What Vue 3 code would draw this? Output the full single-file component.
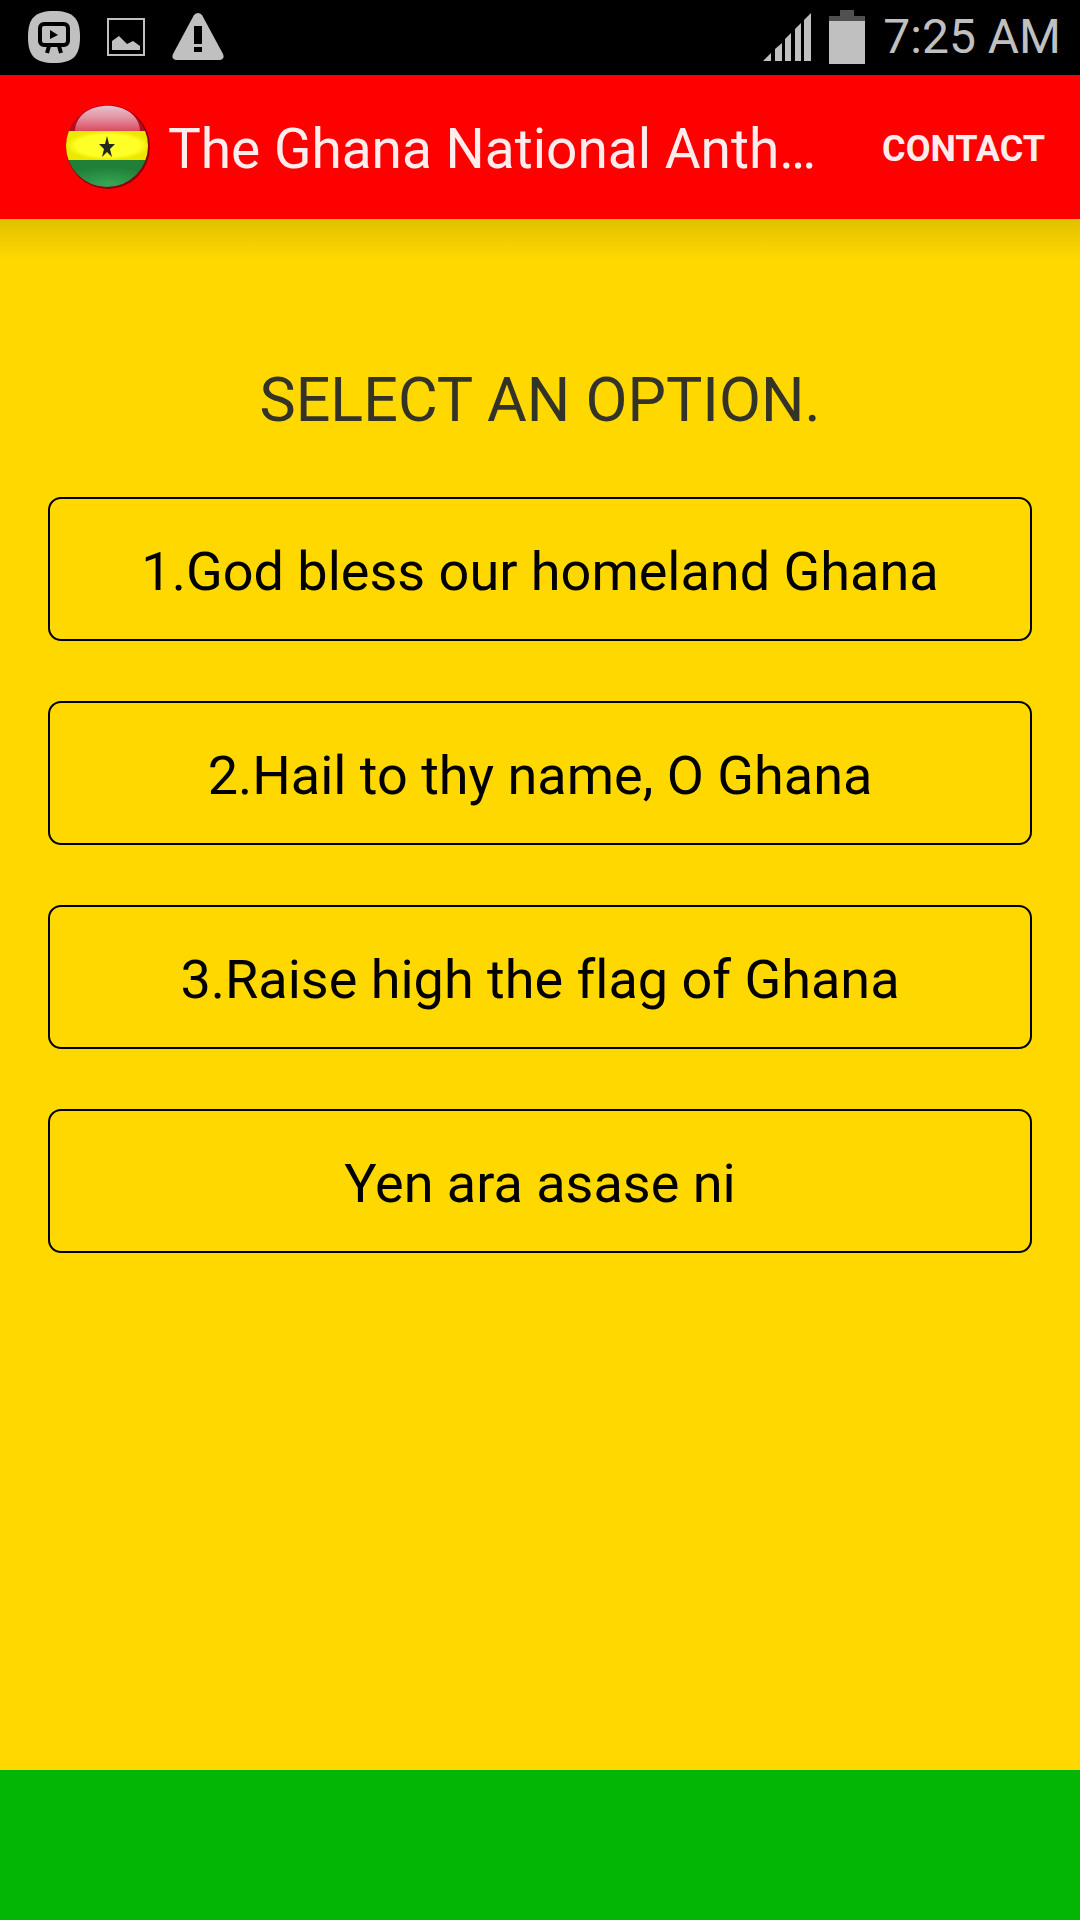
<script setup>
import { ref } from 'vue'

const selected = ref(null)

const songs = [
  { id: 1, label: '1.God bless our homeland Ghana' },
  { id: 2, label: '2.Hail to thy name, O Ghana' },
  { id: 3, label: '3.Raise high the flag of Ghana' },
  { id: 4, label: 'Yen ara asase ni' }
]

// signal strength bars, weakest first
const bars = [
  'M0 48L8 40V48Z',
  'M12 48V36L19 30V48Z',
  'M22 48V26L28 20V48Z',
  'M32 48V16L38 10V48Z',
  'M41 48V7L48 0V48Z'
]
</script>

<template>
  <div class="screen">
    <div class="status-bar">
      <div class="status-icons">
        <svg class="icon-cast" viewBox="0 0 52 52" aria-hidden="true">
          <path d="M26 0C45 0 52 7 52 26S45 52 26 52S0 45 0 26S7 0 26 0Z" fill="#c0c0c0" />
          <rect x="12" y="13" width="28" height="21" rx="4" fill="#c0c0c0" stroke="#000" stroke-width="4" />
          <path d="M22 19L30 24L22 28Z" fill="#000" />
          <path d="M21 35L19 42M31 35L33 42" stroke="#000" stroke-width="4" />
        </svg>
        <svg class="icon-picture" viewBox="0 0 38 38" aria-hidden="true">
          <rect x="1" y="1" width="36" height="36" fill="none" stroke="#c0c0c0" stroke-width="2" />
          <path d="M5 32V23L12 18L20 26L26 23L33 28V32Z" fill="#c0c0c0" />
        </svg>
        <svg class="icon-warning" viewBox="0 0 52 47" aria-hidden="true">
          <path d="M22 2Q26 -2 30 2L51 41Q53 46 48 47H4Q-1 46 1 41Z" fill="#c0c0c0" />
          <path d="M22 13H30V31H22ZM22 34H30V39H22Z" fill="#000" />
        </svg>
      </div>
      <div class="status-info">
        <svg class="icon-signal" viewBox="0 0 48 48" aria-hidden="true">
          <path v-for="d in bars" :key="d" :d="d" fill="#c0c0c0" />
        </svg>
        <svg class="icon-battery" viewBox="0 0 36 54" aria-hidden="true">
          <path d="M11 0H25V6H36V11H0V6H11Z" fill="#505050" />
          <rect y="11" width="36" height="43" fill="#c0c0c0" />
        </svg>
        <span class="clock">7:25 AM</span>
      </div>
    </div>

    <header class="app-bar">
      <svg class="flag" viewBox="0 0 84 84" aria-hidden="true">
        <defs>
          <clipPath id="ball"><circle cx="41" cy="41" r="41" /></clipPath>
          <linearGradient id="gloss" x1="0" y1="0" x2="0" y2="1">
            <stop offset="0" stop-color="#e8c0cc" />
            <stop offset="0.45" stop-color="#e294a4" />
            <stop offset="1" stop-color="#dc4458" />
          </linearGradient>
          <radialGradient id="green" cx="0.5" cy="0.85" r="0.6">
            <stop offset="0" stop-color="#36a856" />
            <stop offset="1" stop-color="#218038" />
          </radialGradient>
          <radialGradient id="yellow" cx="0.5" cy="0.5" r="0.5">
            <stop offset="0.75" stop-color="#ffff28" />
            <stop offset="1" stop-color="#ece800" />
          </radialGradient>
        </defs>
        <circle cx="42" cy="42" r="42" fill="#900010" />
        <g clip-path="url(#ball)">
          <rect width="84" height="27" fill="#b40c20" />
          <path d="M9 27C9 -8 74 -8 74 27Z" fill="url(#gloss)" />
          <rect y="26" width="84" height="29" fill="url(#yellow)" />
          <rect y="55" width="84" height="29" fill="url(#green)" />
        </g>
        <path d="M41 31L43 39H49L44 44L46 52L41 47L36 52L38 44L33 39H39Z" fill="#202820" />
      </svg>
      <h1 class="title">The Ghana National Anth…</h1>
      <button type="button" class="contact">CONTACT</button>
    </header>

    <main class="content">
      <h2 class="heading">SELECT AN OPTION.</h2>
      <div class="options">
        <button
          v-for="song in songs"
          :key="song.id"
          type="button"
          class="option"
          @click="selected = song.id"
        >
          {{ song.label }}
        </button>
      </div>
    </main>

    <footer class="bottom-bar"></footer>
  </div>
</template>

<style>
body {
  margin: 0;
}
</style>

<style scoped>
.screen {
  display: flex;
  flex-direction: column;
  min-height: 100vh;
  font-family: Roboto, sans-serif;
  font-variant-ligatures: none;
  background: #ffd800;
}

.status-bar {
  display: flex;
  justify-content: space-between;
  align-items: center;
  height: 75px;
  padding: 0 19px 2px 28px;
  box-sizing: border-box;
  background: #000;
  color: #c0c0c0;
}

.status-icons {
  display: flex;
  align-items: center;
  gap: 27px;
}

.status-info {
  display: flex;
  align-items: center;
  gap: 18px;
}

.icon-cast {
  width: 52px;
  height: 52px;
}

.icon-picture {
  width: 38px;
  height: 38px;
}

.icon-warning {
  width: 52px;
  height: 47px;
}

.icon-signal {
  width: 48px;
  height: 48px;
}

.icon-battery {
  width: 36px;
  height: 54px;
}

.clock {
  font-size: 48px;
  line-height: 56px;
}

.app-bar {
  display: flex;
  align-items: center;
  height: 144px;
  padding: 0 35px 0 66px;
  box-sizing: border-box;
  background: #ff0000;
  color: #ffecec;
}

.flag {
  flex: none;
  width: 84px;
  height: 84px;
  margin-right: 18px;
}

.title {
  flex: 1;
  margin: 0;
  padding-top: 4px;
  font-size: 55px;
  font-weight: 400;
  line-height: 64px;
  white-space: nowrap;
}

.contact {
  padding: 4px 0 0;
  border: none;
  background: none;
  color: inherit;
  font-family: inherit;
  font-size: 36px;
  font-weight: 700;
  cursor: pointer;
}

.content {
  flex: 1;
  padding: 144px 48px 60px;
  background: linear-gradient(#e2c000, #ffd800) top / 100% 40px no-repeat;
}

.heading {
  margin: 0 0 60px;
  color: #333328;
  font-size: 61px;
  font-weight: 400;
  line-height: 74px;
  text-align: center;
}

.options {
  display: flex;
  flex-direction: column;
  gap: 60px;
}

.option {
  height: 144px;
  padding: 4px 24px 0;
  border: 2px solid #000;
  border-radius: 13px;
  background: transparent;
  color: #000;
  font-family: inherit;
  font-size: 54px;
  font-variant-ligatures: inherit;
  cursor: pointer;
}

.option:active {
  background: #e2c000;
}

.bottom-bar {
  height: 150px;
  background: #04b604;
}
</style>
